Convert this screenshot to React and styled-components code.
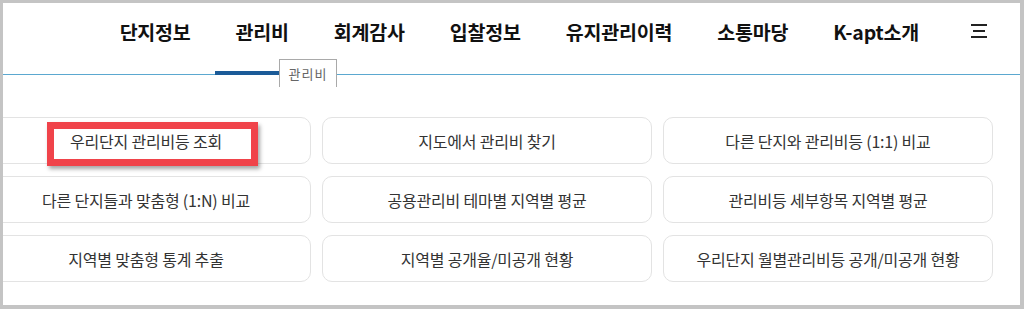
import React from 'react'
import styled, { createGlobalStyle } from 'styled-components'

const GlobalStyle = createGlobalStyle`
  body {
    margin: 0;
    background: #fff;
    font-family: "Noto Sans CJK KR", "Noto Sans", sans-serif;
  }
`

const Frame = styled.div`
  width: 1024px;
  height: 309px;
  box-sizing: border-box;
  border-style: solid;
  border-color: #c4c4c4;
  border-width: 3px 4px 4px 3px;
  background: #fff;
  overflow: hidden;
`

const Nav = styled.nav`
  height: 71px;
  display: flex;
  justify-content: flex-end;
  align-items: center;
  gap: 45px;
  padding-right: 33px;
  padding-bottom: 15px;
  box-sizing: border-box;
`

const NavItem = styled.a`
  font-size: 19.5px;
  font-weight: 700;
  color: #111;
  letter-spacing: -0.2px;
  text-decoration: none;
`

const MenuIcon = styled.svg`
  display: block;
  margin-left: 7px;
`

const Rule = styled.div`
  position: relative;
  height: 1px;
  background: #5ba8d0;
`

const ActiveBar = styled.span`
  position: absolute;
  left: 212px;
  top: -3px;
  width: 64px;
  height: 4px;
  background: #1b5b98;
`

const TabLabel = styled.span`
  position: absolute;
  left: 276px;
  top: -15px;
  width: 58px;
  height: 28px;
  box-sizing: border-box;
  border: 1px solid #a9a9a9;
  border-bottom: none;
  background: #fff;
  display: flex;
  justify-content: center;
  padding-top: 4px;
  font-size: 13px;
  color: #666;
  letter-spacing: 1px;
`

const Grid = styled.div`
  margin: 42px 0 0 -22px;
  display: grid;
  grid-template-columns: repeat(3, 330px);
  column-gap: 11px;
  row-gap: 12px;
`

const Card = styled.a`
  position: relative;
  height: 47px;
  box-sizing: border-box;
  border: 1px solid #e3e3e3;
  border-radius: 10px;
  display: flex;
  align-items: center;
  justify-content: center;
  font-size: 16px;
  color: #333;
  letter-spacing: -0.2px;
  text-decoration: none;
`

const Highlight = styled.span`
  position: absolute;
  left: 65px;
  top: 4px;
  width: 211px;
  height: 44px;
  box-sizing: border-box;
  border: 7px solid #f0434a;
  box-shadow: 2px 3px 4px rgba(0, 0, 0, 0.35);
`

const menu = ['단지정보', '관리비', '회계감사', '입찰정보', '유지관리이력', '소통마당', 'K-apt소개']

const items = [
  '우리단지 관리비등 조회',
  '지도에서 관리비 찾기',
  '다른 단지와 관리비등 (1:1) 비교',
  '다른 단지들과 맞춤형 (1:N) 비교',
  '공용관리비 테마별 지역별 평균',
  '관리비등 세부항목 지역별 평균',
  '지역별 맞춤형 통계 추출',
  '지역별 공개율/미공개 현황',
  '우리단지 월별관리비등 공개/미공개 현황',
]

function App() {
  return (
    <Frame>
      <GlobalStyle />
      <Nav>
        {menu.map((m) => (
          <NavItem key={m}>{m}</NavItem>
        ))}
        <MenuIcon width="16" height="14" viewBox="0 0 16 14">
          <rect x="0" y="0" width="16" height="2" fill="#222" />
          <rect x="2" y="6" width="12" height="2" fill="#222" />
          <rect x="0" y="12" width="16" height="2" fill="#222" />
        </MenuIcon>
      </Nav>
      <Rule>
        <ActiveBar />
        <TabLabel>관리비</TabLabel>
      </Rule>
      <Grid>
        {items.map((t, i) => (
          <Card key={t}>
            {t}
            {i === 0 && <Highlight />}
          </Card>
        ))}
      </Grid>
    </Frame>
  )
}

export default App
